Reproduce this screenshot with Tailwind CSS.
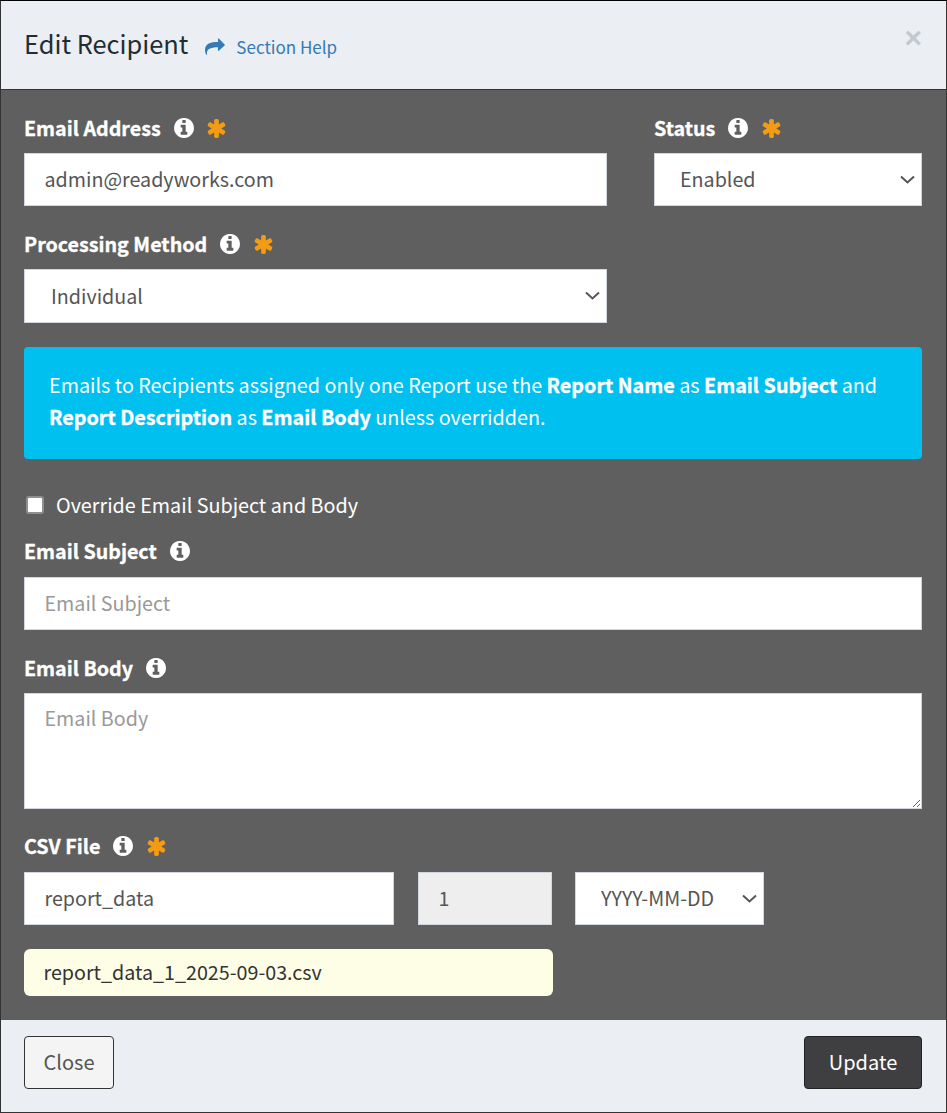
<!DOCTYPE html>
<html lang="en">
<head>
    <meta charset="UTF-8">
    <meta name="viewport" content="width=device-width, initial-scale=1.0">
    <title>Edit Recipient</title>
    <script src="https://cdn.jsdelivr.net/npm/@tailwindcss/browser@4"></script>
</head>
<body class="font-['Noto_Sans_CJK_SC',sans-serif] text-[19.7px] bg-[#5f5f5f]">

    <div class="w-[947px] h-[1113px] flex flex-col border border-[#333] border-t-black overflow-hidden">

        <!-- HEADER -->
        <div class="h-[89px] shrink-0 bg-[#ebeef3] border-b border-[#333] flex items-start pl-[23px] pr-[24px] pt-[24px]">
            <span class="text-[25.4px] leading-[36px] text-[#222d32]">Edit Recipient</span>
            <svg class="w-[20px] h-[17px] ml-[17px] mt-[13px] fill-[#337ab7]" viewBox="0 0 20 17"><path d="M19.6 6.5 13.8.6Q13 0 13 1V4C6 4 0 5.5 0 12 0 14 .8 16 1.6 17 1.8 17.3 2.2 17 2.1 16.6 1.2 12 4 9.4 13 9.3V12.5Q13 13.4 13.8 12.8L19.6 7.4Q20 7 19.6 6.5Z"/></svg>
            <a href="#" class="ml-[11px] mt-[8px] text-[17px] leading-[28px] text-[#337ab7]">Section Help</a>
            <span class="ml-auto mt-[2px] font-['Liberation_Sans',sans-serif] text-[30px] leading-[22px] font-bold text-[#c5c8cd]">×</span>
        </div>

        <!-- BODY -->
        <div class="h-[930px] shrink-0 bg-[#5f5f5f] pl-[23px] pr-[24px] pt-[24px]">

            <div class="flex gap-[47px]">
                <div class="w-[583px]">
                    <div class="flex items-center h-[28px] mb-[11px] text-white font-bold [-webkit-text-stroke:0.3px_white]">
                        <span>Email Address</span>
                        <svg class="w-[20px] h-[20px] ml-[13px] fill-white" viewBox="128 128 1536 1536"><path d="M1152 1376v-160q0-14-9-23t-23-9h-96v-512q0-14-9-23t-23-9H672q-14 0-23 9t-9 23v160q0 14 9 23t23 9h96v320h-96q-14 0-23 9t-9 23v160q0 14 9 23t23 9h448q14 0 23-9t9-23zm-128-896V320q0-14-9-23t-23-9H800q-14 0-23 9t-9 23v160q0 14 9 23t23 9h192q14 0 23-9t9-23zm640 416q0 209-103 385.5T1281.5 1561 896 1664t-385.5-103T231 1281.5 128 896t103-385.5T510.5 231 896 128t385.5 103T1561 510.5 1664 896z"/></svg>
                        <svg class="w-[19px] h-[19px] ml-[13px] fill-[#f39c12]" viewBox="128 128 1536 1536"><path d="M1546 1050q46 26 59.5 77.5T1593 1225l-64 110q-26 46-77.5 59.5T1354 1382l-266-153v307q0 52-38 90t-90 38H832q-52 0-90-38t-38-90v-307l-266 153q-46 26-97.5 12.5T263 1335l-64-110q-26-46-12.5-97.5T246 1050l266-154-266-154q-46-26-59.5-77.5T199 567l64-110q26-46 77.5-59.5T438 410l266 153V256q0-52 38-90t90-38h128q52 0 90 38t38 90v307l266-153q46-26 97.5-12.5T1529 457l64 110q26 46 12.5 97.5T1546 742l-266 154z"/></svg>
                    </div>
                    <input type="text" value="admin@readyworks.com" class="block w-full h-[53px] bg-white border border-[#d2d6de] px-[19.5px] pb-[2px] text-[#555]">
                </div>
                <div class="w-[268px]">
                    <div class="flex items-center h-[28px] mb-[11px] text-white font-bold [-webkit-text-stroke:0.3px_white]">
                        <span>Status</span>
                        <svg class="w-[20px] h-[20px] ml-[13px] fill-white" viewBox="128 128 1536 1536"><path d="M1152 1376v-160q0-14-9-23t-23-9h-96v-512q0-14-9-23t-23-9H672q-14 0-23 9t-9 23v160q0 14 9 23t23 9h96v320h-96q-14 0-23 9t-9 23v160q0 14 9 23t23 9h448q14 0 23-9t9-23zm-128-896V320q0-14-9-23t-23-9H800q-14 0-23 9t-9 23v160q0 14 9 23t23 9h192q14 0 23-9t9-23zm640 416q0 209-103 385.5T1281.5 1561 896 1664t-385.5-103T231 1281.5 128 896t103-385.5T510.5 231 896 128t385.5 103T1561 510.5 1664 896z"/></svg>
                        <svg class="w-[19px] h-[19px] ml-[14px] fill-[#f39c12]" viewBox="128 128 1536 1536"><path d="M1546 1050q46 26 59.5 77.5T1593 1225l-64 110q-26 46-77.5 59.5T1354 1382l-266-153v307q0 52-38 90t-90 38H832q-52 0-90-38t-38-90v-307l-266 153q-46 26-97.5 12.5T263 1335l-64-110q-26-46-12.5-97.5T246 1050l266-154-266-154q-46-26-59.5-77.5T199 567l64-110q26-46 77.5-59.5T438 410l266 153V256q0-52 38-90t90-38h128q52 0 90 38t38 90v307l266-153q46-26 97.5-12.5T1529 457l64 110q26 46 12.5 97.5T1546 742l-266 154z"/></svg>
                    </div>
                    <div class="relative">
                        <select class="block appearance-none w-full h-[53px] bg-white border border-[#d2d6de] pl-[25px] pb-[1px] text-[#555]"><option>Enabled</option></select>
                        <svg class="absolute right-[7px] top-[22px] w-[15px] h-[9px] fill-none stroke-[#555] stroke-2" viewBox="0 0 15 9"><path d="M1 1.5 7.5 7.5 14 1.5"/></svg>
                    </div>
                </div>
            </div>

            <div class="w-[583px] mt-[24px]">
                <div class="flex items-center h-[28px] mb-[11px] text-white font-bold [-webkit-text-stroke:0.3px_white]">
                    <span>Processing Method</span>
                    <svg class="w-[20px] h-[20px] ml-[13px] fill-white" viewBox="128 128 1536 1536"><path d="M1152 1376v-160q0-14-9-23t-23-9h-96v-512q0-14-9-23t-23-9H672q-14 0-23 9t-9 23v160q0 14 9 23t23 9h96v320h-96q-14 0-23 9t-9 23v160q0 14 9 23t23 9h448q14 0 23-9t9-23zm-128-896V320q0-14-9-23t-23-9H800q-14 0-23 9t-9 23v160q0 14 9 23t23 9h192q14 0 23-9t9-23zm640 416q0 209-103 385.5T1281.5 1561 896 1664t-385.5-103T231 1281.5 128 896t103-385.5T510.5 231 896 128t385.5 103T1561 510.5 1664 896z"/></svg>
                    <svg class="w-[19px] h-[19px] ml-[14px] fill-[#f39c12]" viewBox="128 128 1536 1536"><path d="M1546 1050q46 26 59.5 77.5T1593 1225l-64 110q-26 46-77.5 59.5T1354 1382l-266-153v307q0 52-38 90t-90 38H832q-52 0-90-38t-38-90v-307l-266 153q-46 26-97.5 12.5T263 1335l-64-110q-26-46-12.5-97.5T246 1050l266-154-266-154q-46-26-59.5-77.5T199 567l64-110q26-46 77.5-59.5T438 410l266 153V256q0-52 38-90t90-38h128q52 0 90 38t38 90v307l266-153q46-26 97.5-12.5T1529 457l64 110q26 46 12.5 97.5T1546 742l-266 154z"/></svg>
                </div>
                <div class="relative">
                    <select class="block appearance-none w-full h-[54px] bg-white border border-[#d2d6de] pl-[26px] text-[#555]"><option>Individual</option></select>
                    <svg class="absolute right-[7px] top-[22px] w-[15px] h-[9px] fill-none stroke-[#555] stroke-2" viewBox="0 0 15 9"><path d="M1 1.5 7.5 7.5 14 1.5"/></svg>
                </div>
            </div>

            <!-- INFO BOX -->
            <div class="mt-[24px] h-[112px] bg-[#00c0ef] rounded-[4px] px-[25px] py-[22px] text-[19.75px] text-white leading-[32px]">
                Emails to Recipients assigned only one Report use the <b class="[-webkit-text-stroke:0.3px_white]">Report Name</b> as <b class="[-webkit-text-stroke:0.3px_white]">Email Subject</b> and<br>
                <b class="[-webkit-text-stroke:0.3px_white]">Report Description</b> as <b class="[-webkit-text-stroke:0.3px_white]">Email Body</b> unless overridden.
            </div>

            <label class="flex items-center h-[28px] mt-[32px] text-[19.75px] text-white">
                <input type="checkbox" class="appearance-none w-[18px] h-[18px] ml-[2px] mr-[12px] bg-white border-2 border-[#8f8f8f] rounded-[3px]">
                Override Email Subject and Body
            </label>

            <div class="flex items-center h-[28px] mt-[18px] mb-[12px] text-white font-bold [-webkit-text-stroke:0.3px_white]">
                <span>Email Subject</span>
                <svg class="w-[20px] h-[20px] ml-[13px] fill-white" viewBox="128 128 1536 1536"><path d="M1152 1376v-160q0-14-9-23t-23-9h-96v-512q0-14-9-23t-23-9H672q-14 0-23 9t-9 23v160q0 14 9 23t23 9h96v320h-96q-14 0-23 9t-9 23v160q0 14 9 23t23 9h448q14 0 23-9t9-23zm-128-896V320q0-14-9-23t-23-9H800q-14 0-23 9t-9 23v160q0 14 9 23t23 9h192q14 0 23-9t9-23zm640 416q0 209-103 385.5T1281.5 1561 896 1664t-385.5-103T231 1281.5 128 896t103-385.5T510.5 231 896 128t385.5 103T1561 510.5 1664 896z"/></svg>
            </div>
            <input type="text" placeholder="Email Subject" class="block w-full h-[53px] bg-white border border-[#d2d6de] px-[19.5px] pb-[2px] text-[#555] placeholder:text-[#999]">

            <div class="flex items-center h-[28px] mt-[24px] mb-[11px] text-white font-bold [-webkit-text-stroke:0.3px_white]">
                <span>Email Body</span>
                <svg class="w-[20px] h-[20px] ml-[13px] fill-white" viewBox="128 128 1536 1536"><path d="M1152 1376v-160q0-14-9-23t-23-9h-96v-512q0-14-9-23t-23-9H672q-14 0-23 9t-9 23v160q0 14 9 23t23 9h96v320h-96q-14 0-23 9t-9 23v160q0 14 9 23t23 9h448q14 0 23-9t9-23zm-128-896V320q0-14-9-23t-23-9H800q-14 0-23 9t-9 23v160q0 14 9 23t23 9h192q14 0 23-9t9-23zm640 416q0 209-103 385.5T1281.5 1561 896 1664t-385.5-103T231 1281.5 128 896t103-385.5T510.5 231 896 128t385.5 103T1561 510.5 1664 896z"/></svg>
            </div>
            <textarea placeholder="Email Body" class="block w-full h-[116px] bg-white border border-[#d2d6de] px-[19.5px] py-[9px] text-[#555] placeholder:text-[#999]"></textarea>

            <div class="flex items-center h-[28px] mt-[23px] mb-[12px] text-white font-bold [-webkit-text-stroke:0.3px_white]">
                <span>CSV File</span>
                <svg class="w-[20px] h-[20px] ml-[13px] fill-white" viewBox="128 128 1536 1536"><path d="M1152 1376v-160q0-14-9-23t-23-9h-96v-512q0-14-9-23t-23-9H672q-14 0-23 9t-9 23v160q0 14 9 23t23 9h96v320h-96q-14 0-23 9t-9 23v160q0 14 9 23t23 9h448q14 0 23-9t9-23zm-128-896V320q0-14-9-23t-23-9H800q-14 0-23 9t-9 23v160q0 14 9 23t23 9h192q14 0 23-9t9-23zm640 416q0 209-103 385.5T1281.5 1561 896 1664t-385.5-103T231 1281.5 128 896t103-385.5T510.5 231 896 128t385.5 103T1561 510.5 1664 896z"/></svg>
                <svg class="w-[19px] h-[19px] ml-[14px] fill-[#f39c12]" viewBox="128 128 1536 1536"><path d="M1546 1050q46 26 59.5 77.5T1593 1225l-64 110q-26 46-77.5 59.5T1354 1382l-266-153v307q0 52-38 90t-90 38H832q-52 0-90-38t-38-90v-307l-266 153q-46 26-97.5 12.5T263 1335l-64-110q-26-46-12.5-97.5T246 1050l266-154-266-154q-46-26-59.5-77.5T199 567l64-110q26-46 77.5-59.5T438 410l266 153V256q0-52 38-90t90-38h128q52 0 90 38t38 90v307l266-153q46-26 97.5-12.5T1529 457l64 110q26 46 12.5 97.5T1546 742l-266 154z"/></svg>
            </div>
            <div class="flex">
                <input type="text" value="report_data" class="w-[370px] h-[53px] bg-white border border-[#d2d6de] px-[19.5px] pb-[2px] text-[#555]">
                <input type="text" value="1" disabled class="w-[134px] h-[53px] ml-[24px] bg-[#eee] border border-[#d2d6de] px-[19.5px] pb-[2px] text-[#555]">
                <div class="relative ml-[23px]">
                    <select class="block appearance-none w-[189px] h-[53px] bg-white border border-[#d2d6de] pl-[25px] pb-[2px] text-[#555]"><option>YYYY-MM-DD</option></select>
                    <svg class="absolute right-[7px] top-[22px] w-[15px] h-[9px] fill-none stroke-[#555] stroke-2" viewBox="0 0 15 9"><path d="M1 1.5 7.5 7.5 14 1.5"/></svg>
                </div>
            </div>

            <div class="w-[529px] h-[47px] mt-[24px] bg-[#fefde6] rounded-[6px] px-[19.5px] pb-[2px] flex items-center text-[#333]">report_data_1_2025-09-03.csv</div>
        </div>

        <!-- FOOTER -->
        <div class="flex-1 bg-[#ebeef3] flex items-start justify-between pl-[23px] pr-[24px] pt-[16px]">
            <button class="w-[90px] h-[53px] bg-[#f4f4f4] border border-[#333] rounded-[4px] pb-[2px] text-[20px] text-[#555]">Close</button>
            <button class="w-[118px] h-[53px] bg-[#3f3f41] border border-[#222] rounded-[4px] pb-[2px] text-[20px] text-white">Update</button>
        </div>
    </div>

</body>
</html>
